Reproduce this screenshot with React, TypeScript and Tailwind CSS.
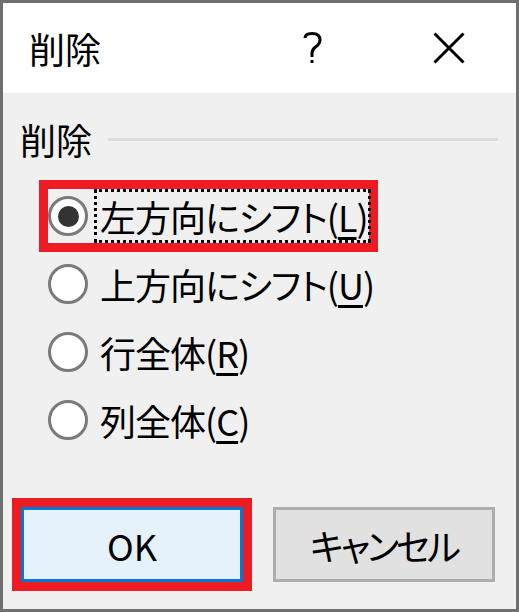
const FONT = "font-['Noto_Sans_CJK_JP','Noto_Sans',sans-serif]";

function Radio({ checked }: { checked?: boolean }) {
  return (
    <span className="flex h-[40px] w-[40px] shrink-0 items-center justify-center rounded-full border-[3px] border-[#7a7a7a] bg-white">
      {checked && <span className="h-[21px] w-[21px] rounded-full bg-[#333333]" />}
    </span>
  );
}

function Label({ text, accel }: { text: string; accel: string }) {
  return (
    <span className="whitespace-nowrap text-[36px] leading-none tracking-[-1px] text-black [font-feature-settings:'palt']">
      {text}(<span className="underline decoration-[3px] underline-offset-[5px]">{accel}</span>)
    </span>
  );
}

const OPTIONS = [
  { text: "上方向にシフト", accel: "U" },
  { text: "行全体", accel: "R" },
  { text: "列全体", accel: "C" },
];

export default function App() {
  return (
    <div className={`flex h-[612px] w-[519px] flex-col border-[3px] border-[#6f6f6f] bg-[#f0f0f0] ${FONT}`}>
      {/* title bar */}
      <div className="flex h-[90px] shrink-0 items-center bg-white pl-[26px]">
        <span className="text-[36px] leading-none text-black">削除</span>
        <svg className="ml-[202px]" width="20" height="32" viewBox="0 0 20 32">
          <path d="M2 6 Q2 1.5 9 1.5 Q17 1.5 17 8 Q17 12 12.5 15 Q9 17.5 9 21 V25" fill="none" stroke="#000" strokeWidth="3" />
          <rect x="7.5" y="28" width="3" height="3" fill="#000" />
        </svg>
        <svg className="ml-[110px]" width="32" height="32" viewBox="0 0 32 32">
          <path d="M1.5 1.5 L30.5 30.5 M30.5 1.5 L1.5 30.5" stroke="#000" strokeWidth="3" />
        </svg>
      </div>

      {/* body */}
      <div className="flex flex-1 flex-col">
        <div className="mt-[28px] flex items-center pl-[17px] pr-[18px]">
          <span className="text-[36px] leading-none text-black">削除</span>
          <div className="ml-[16px] h-[3px] flex-1 bg-[#dcdcdc]" />
        </div>

        <div className="mt-[23px] flex flex-col pl-[36px]">
          <div className="mb-[-2px] flex h-[72px] w-[339px] items-center border-[9px] border-[#ed1c24]">
            <Radio checked />
            <div className="ml-[6px] flex h-full flex-1 items-center border-[3px] border-dotted border-black pl-[3px]">
              <Label text="左方向にシフト" accel="L" />
            </div>
          </div>
          {OPTIONS.map((o) => (
            <div key={o.accel} className="flex h-[68px] items-center pl-[9px]">
              <Radio />
              <div className="ml-[9px] flex items-center pl-[3px]">
                <Label text={o.text} accel={o.accel} />
              </div>
            </div>
          ))}
        </div>

        <div className="mt-[44px] flex items-start pl-[9px]">
          <div className="border-[9px] border-[#ed1c24]">
            <button className="flex h-[75px] w-[222px] items-center justify-center border-[3px] border-[#0078d7] bg-[#e5f1fb] text-[36px] leading-none text-black">
              OK
            </button>
          </div>
          <button className="ml-[21px] mt-[9px] flex h-[75px] w-[222px] items-center justify-center whitespace-nowrap border-[3px] border-[#adadad] bg-[#e1e1e1] text-[36px] leading-none tracking-[-3px] text-black [font-feature-settings:'palt']">
            キャンセル
          </button>
        </div>
      </div>
    </div>
  );
}
